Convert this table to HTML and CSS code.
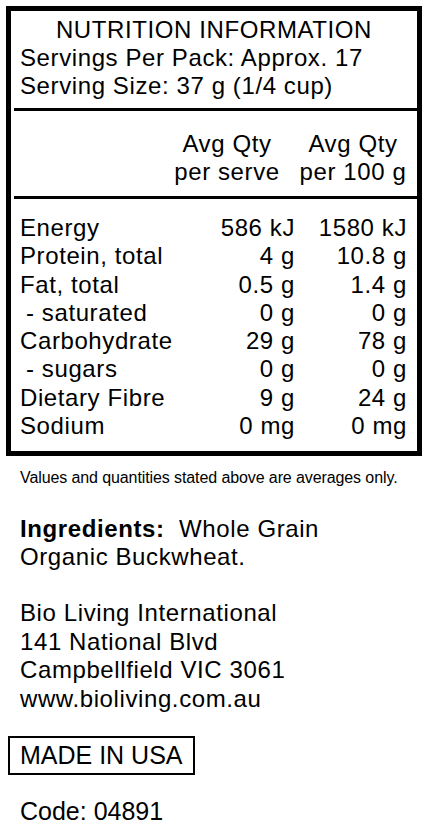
FILE: index.html
```html
<!DOCTYPE html>
<html lang="en">
<head>
  <meta charset="UTF-8" />
  <meta name="viewport" content="width=device-width, initial-scale=1.0"/>
  <title>Nutrition Information</title>
  <link rel="stylesheet" href="styles.css">
</head>
<body>

  <!-- PANEL DE NUTRICION -->
  <div class="panel">
    <div class="panel-head">
      <div class="titulo">NUTRITION INFORMATION</div>
      <div>Servings Per Pack: Approx. 17</div>
      <div>Serving Size: 37 g (1/4 cup)</div>
    </div>
    <div class="linea"></div>

    <div class="fila cabecera">
      <div></div>
      <div class="centro">Avg Qty<br>per serve</div>
      <div class="centro">Avg Qty<br>per 100 g</div>
    </div>
    <div class="linea"></div>

    <div class="datos">
      <div class="fila"><div>Energy</div><div class="num">586 kJ</div><div class="num">1580 kJ</div></div>
      <div class="fila"><div>Protein, total</div><div class="num">4 g</div><div class="num">10.8 g</div></div>
      <div class="fila"><div>Fat, total</div><div class="num">0.5 g</div><div class="num">1.4 g</div></div>
      <div class="fila"><div class="sub">- saturated</div><div class="num">0 g</div><div class="num">0 g</div></div>
      <div class="fila"><div>Carbohydrate</div><div class="num">29 g</div><div class="num">78 g</div></div>
      <div class="fila"><div class="sub">- sugars</div><div class="num">0 g</div><div class="num">0 g</div></div>
      <div class="fila"><div>Dietary Fibre</div><div class="num">9 g</div><div class="num">24 g</div></div>
      <div class="fila"><div>Sodium</div><div class="num">0 mg</div><div class="num">0 mg</div></div>
    </div>
  </div>

  <p class="nota">Values and quantities stated above are averages only.</p>

  <p class="ingredientes"><b>Ingredients:</b>&nbsp; Whole Grain<br>Organic Buckwheat.</p>

  <p class="direccion">Bio Living International<br>141 National Blvd<br>Campbellfield VIC 3061<br>www.bioliving.com.au</p>

  <div class="origen">MADE IN USA</div>

  <p class="codigo">Code: 04891</p>

</body>
</html>
```

FILE: styles.css
```css
body {
  font-family: "Liberation Sans", Arial, sans-serif;
  color: #000;
  background: #fff;
  margin: 0;
  padding: 6px 0 0 0;
}

.panel {
  width: 406px;
  margin-left: 6px;
  border: 5px solid #000;
  font-size: 24px;
  letter-spacing: 0.6px;
  line-height: 28px;
  white-space: nowrap;
}

.panel-head {
  padding: 5px 9px 8px 9px;
}

.titulo {
  text-align: center;
}

.linea {
  height: 3px;
  background: #000;
  margin-left: 3px;
}

.fila {
  display: grid;
  grid-template-columns: minmax(0, 1fr) 90px 108px;
  column-gap: 4px;
  padding: 0 10px 0 9px;
}

.cabecera {
  grid-template-columns: minmax(0, 1fr) 136px 108px;
  padding-top: 19px;
  padding-bottom: 10px;
}

.centro {
  text-align: center;
}

.datos {
  padding: 15px 0 11px 0;
}

.datos .fila {
  line-height: 28.3px;
}

.num {
  text-align: right;
}

.sub {
  padding-left: 6px;
}

.nota {
  font-size: 16px;
  letter-spacing: -0.1px;
  line-height: 20px;
  margin: 12px 0 0 20px;
}

.ingredientes, .direccion {
  font-size: 24px;
  letter-spacing: 0.6px;
  line-height: 28px;
  margin: 27px 0 0 20px;
}

.direccion {
  margin-top: 28px;
  line-height: 28.5px;
}

.origen {
  display: inline-block;
  margin: 23px 0 0 8px;
  border: 2px solid #000;
  padding: 3px 10px 4px 10px;
  font-size: 25px;
  line-height: 28px;
}

.codigo {
  font-size: 25px;
  line-height: 28px;
  margin: 22px 0 0 20px;
}
```
